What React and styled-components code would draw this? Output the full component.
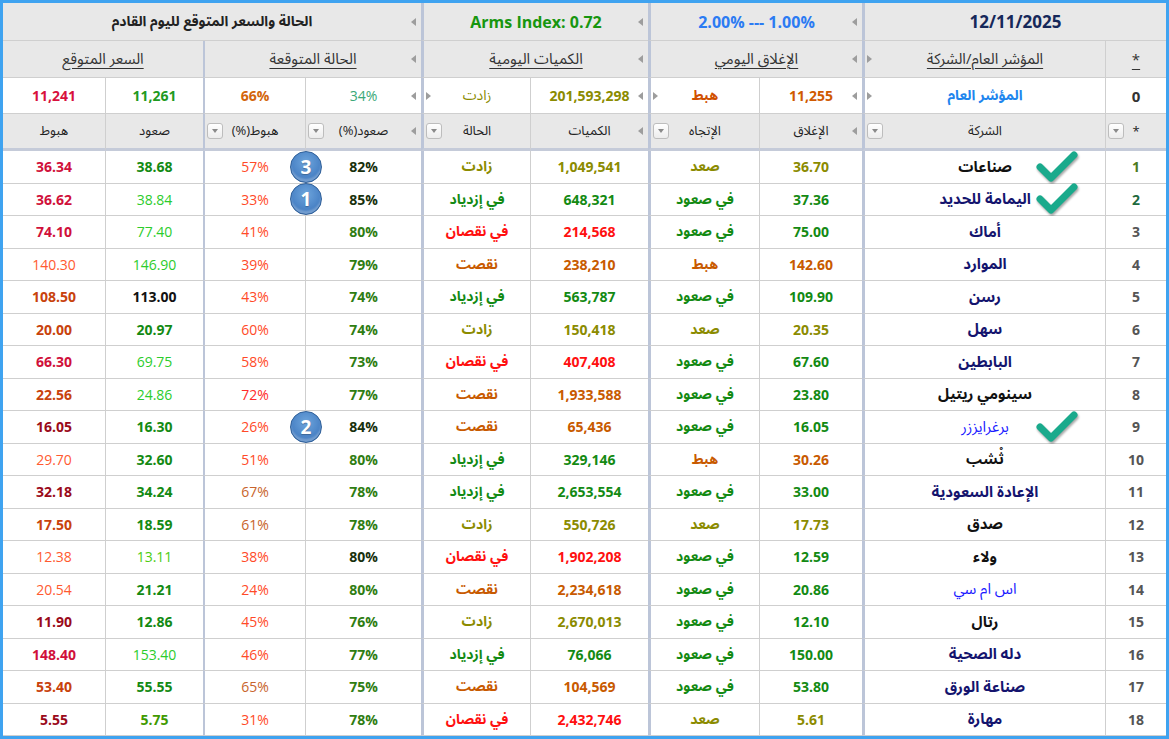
import React from "react";
import styled, { createGlobalStyle } from "styled-components";

const GlobalStyle = createGlobalStyle`
  html, body {
    margin: 0;
    padding: 0;
    background: #fff;
  }
  body {
    font-family: "Open Sans", "Noto Sans Arabic", "DejaVu Sans", sans-serif;
  }
`;

const SEP = {
  0: "none",
  1: "1px solid #cfcfcf",
  2: "2px solid #bcc5d8",
  3: "3px solid #bcc5d8",
};

// right to left: *, company, close, direction, volume, status, up%, down%, up price, down price
const COL_SEP = [1, 3, 1, 3, 1, 3, 1, 2, 1, 0];

const C = {
  olive: "#8b8b00",
  green: "#138a13",
  orange: "#c85a00",
  red: "#ff1010",
  navy: "#14146e",
  blue: "#1a1aff",
  black: "#111",
};

const Frame = styled.div`
  width: 1169px;
  height: 739px;
  box-sizing: border-box;
  border: 3px solid #3fa3f0;
  background: #fff;
  overflow: hidden;
`;

const Grid = styled.div`
  display: grid;
  direction: rtl;
  grid-template-columns: 61px 243px 103px 111px 118px 109px 116px 102px 98px 102px;
  grid-template-rows: 38px 37px 36px 37px repeat(18, 32.5px);
`;

const Cell = styled.div`
  position: relative;
  direction: ltr;
  box-sizing: border-box;
  display: flex;
  align-items: center;
  justify-content: center;
  grid-column: span ${(p) => p.$span || 1};
  border-bottom: ${(p) => p.$bottom || "1px solid #cfcfcf"};
  border-left: ${(p) => SEP[p.$sep]};
  background: ${(p) => (p.$head ? "#e8e8e8" : "#fff")};
  color: ${(p) => p.$color || "#222"};
  font-size: ${(p) => p.$size || 14}px;
  font-weight: ${(p) => (p.$bold ? 700 : 400)};
  white-space: nowrap;
`;

const ColHead = styled(Cell).attrs({ $head: true, $size: 13, $bottom: "3px solid #c5cbd9" })``;

// the grid is right-to-left, so "(%)" sits on the left of the word
const Pct = styled.span`
  display: inline-flex;
  align-items: baseline;
  direction: ltr;
`;

const GroupTitle = styled.span`
  font-size: 15px;
  color: #333;
  text-decoration: underline;
  text-underline-offset: 4px;
`;

const Grip = styled.span`
  position: absolute;
  top: 50%;
  margin-top: -4px;
  width: 0;
  height: 0;
  border-top: 4px solid transparent;
  border-bottom: 4px solid transparent;
  ${(p) =>
    p.$to === "left"
      ? "right: 5px; border-right: 5px solid #9d9d9d;"
      : "left: 2px; border-left: 5px solid #9d9d9d;"}
`;

const Drop = styled.span`
  position: absolute;
  left: 2px;
  top: 50%;
  margin-top: -8px;
  width: 16px;
  height: 16px;
  box-sizing: border-box;
  border: 1px solid #bdbdbd;
  border-radius: 3px;
  background: linear-gradient(#ffffff, #ececec);

  &::after {
    content: "";
    position: absolute;
    left: 4px;
    top: 5px;
    border-left: 3px solid transparent;
    border-right: 3px solid transparent;
    border-top: 4px solid #8a8a8a;
  }
`;

const Badge = styled.span`
  position: absolute;
  z-index: 3;
  left: -16px;
  top: 50%;
  margin-top: -16px;
  width: 32px;
  height: 32px;
  box-sizing: border-box;
  border-radius: 50%;
  border: 1.5px solid #2f5f98;
  background: radial-gradient(circle at 50% 35%, #6ea5dc 0%, #4a83c6 60%, #3b70b0 100%);
  box-shadow: inset 0 -3px 2px rgba(255, 255, 255, 0.25);
  color: #fff;
  font-size: 19px;
  font-weight: 700;
  display: flex;
  align-items: center;
  justify-content: center;
  text-shadow: 0 1px 1px rgba(0, 0, 0, 0.25);
`;

const Check = styled.svg`
  position: absolute;
  right: 26px;
  top: 50%;
  margin-top: -17px;
  width: 44px;
  height: 33px;
  filter: drop-shadow(1px 2px 1px rgba(0, 0, 0, 0.35));
`;

const CheckMark = () => (
  <Check viewBox="0 0 44 33">
    <path
      d="M5 17 L16 28 L39 5"
      fill="none"
      stroke="#1aaa8c"
      strokeWidth="7"
      strokeLinecap="round"
      strokeLinejoin="round"
    />
  </Check>
);

const DIR_COLOR = { "صعد": C.olive, "في صعود": C.green, "هبط": C.orange };
const STATUS_COLOR = {
  "زادت": C.olive,
  "في إزدياد": C.green,
  "في نقصان": C.red,
  "نقصت": C.orange,
};

const UP_PRICE = {
  b: { color: C.green, bold: true },
  l: { color: "#2ccc2c", bold: false },
  y: { color: "#4ccc10", bold: false },
  k: { color: C.black, bold: true },
  o: { color: "#3f9a00", bold: true },
};

const DOWN_PRICE = {
  c: { color: "#d0103a", bold: true },
  r: { color: "#c8420c", bold: true },
  d: { color: "#9a0a1a", bold: true },
  l: { color: "#ff5a30", bold: false },
};

const DOWN_PCT = { a: "#ff4a28", b: "#ff2a2a", c: "#c8642c" };

const rows = [
  ["صناعات", "k", "36.70", "صعد", "1,049,541", "زادت", 82, 57, "a", "38.68", "b", "36.34", "c", 3, true],
  ["اليمامة للحديد", "n", "37.36", "في صعود", "648,321", "في إزدياد", 85, 33, "a", "38.84", "l", "36.62", "c", 1, true],
  ["أماك", "n", "75.00", "في صعود", "214,568", "في نقصان", 80, 41, "a", "77.40", "l", "74.10", "c"],
  ["الموارد", "n", "142.60", "هبط", "238,210", "نقصت", 79, 39, "a", "146.90", "l", "140.30", "l"],
  ["رسن", "n", "109.90", "في صعود", "563,787", "في إزدياد", 74, 43, "a", "113.00", "k", "108.50", "r"],
  ["سهل", "n", "20.35", "صعد", "150,418", "زادت", 74, 60, "a", "20.97", "b", "20.00", "r"],
  ["البابطين", "n", "67.60", "في صعود", "407,408", "في نقصان", 73, 58, "a", "69.75", "l", "66.30", "c"],
  ["سينومي ريتيل", "k", "23.80", "في صعود", "1,933,588", "نقصت", 77, 72, "b", "24.86", "l", "22.56", "r"],
  ["برغرايززر", "u", "16.05", "في صعود", "65,436", "نقصت", 84, 26, "a", "16.30", "b", "16.05", "d", 2, true],
  ["ثْشب", "k", "30.26", "هبط", "329,146", "في إزدياد", 80, 51, "a", "32.60", "b", "29.70", "l"],
  ["الإعادة السعودية", "n", "33.00", "في صعود", "2,653,554", "في إزدياد", 78, 67, "c", "34.24", "b", "32.18", "d"],
  ["صدق", "k", "17.73", "صعد", "550,726", "زادت", 78, 61, "c", "18.59", "b", "17.50", "r"],
  ["ولاء", "k", "12.59", "في صعود", "1,902,208", "في نقصان", 80, 38, "a", "13.11", "y", "12.38", "l"],
  ["اس ام سي", "u", "20.86", "في صعود", "2,234,618", "نقصت", 80, 24, "a", "21.21", "b", "20.54", "l"],
  ["رتال", "k", "12.10", "في صعود", "2,670,013", "زادت", 76, 45, "a", "12.86", "b", "11.90", "d"],
  ["دله الصحية", "n", "150.00", "في صعود", "76,066", "في إزدياد", 77, 46, "a", "153.40", "l", "148.40", "c"],
  ["صناعة الورق", "n", "53.80", "في صعود", "104,569", "نقصت", 75, 65, "c", "55.55", "b", "53.40", "r"],
  ["مهارة", "n", "5.61", "صعد", "2,432,746", "في نقصان", 78, 31, "a", "5.75", "o", "5.55", "d"],
];

const NAME_STYLE = {
  k: { color: C.black, bold: true },
  n: { color: C.navy, bold: true },
  u: { color: C.blue, bold: false },
};

const DARK_UP = [1, 2, 9, 13];
const IDX_COLOR = { 1: "#4e7a1e", 2: "#1e6a3e" };

const DataRow = ({ n, r }) => {
  const [name, nameKind, close, dir, vol, status, up, down, downKind, upP, upKind, downP, downPKind, badge, check] = r;
  const ns = NAME_STYLE[nameKind];
  const us = UP_PRICE[upKind];
  const ds = DOWN_PRICE[downPKind];
  return (
    <>
      <Cell $sep={COL_SEP[0]} $bold $color={IDX_COLOR[n] || "#555"}>{n}</Cell>
      <Cell $sep={COL_SEP[1]} $bold={ns.bold} $color={ns.color} $size={15}>
        {name}
        {check && <CheckMark />}
      </Cell>
      <Cell $sep={COL_SEP[2]} $bold $color={DIR_COLOR[dir]}>{close}</Cell>
      <Cell $sep={COL_SEP[3]} $bold $color={DIR_COLOR[dir]}>{dir}</Cell>
      <Cell $sep={COL_SEP[4]} $bold $color={STATUS_COLOR[status]}>{vol}</Cell>
      <Cell $sep={COL_SEP[5]} $bold $color={STATUS_COLOR[status]}>{status}</Cell>
      <Cell $sep={COL_SEP[6]} $bold $color={DARK_UP.includes(n) ? "#18300c" : "#2f7d12"}>
        {up}%
        {badge && <Badge>{badge}</Badge>}
      </Cell>
      <Cell $sep={COL_SEP[7]} $color={DOWN_PCT[downKind]}>{down}%</Cell>
      <Cell $sep={COL_SEP[8]} $bold={us.bold} $color={us.color}>{upP}</Cell>
      <Cell $sep={COL_SEP[9]} $bold={ds.bold} $color={ds.color}>{downP}</Cell>
    </>
  );
};

export default function App() {
  return (
    <Frame>
      <GlobalStyle />
      <Grid>
        {/* top header */}
        <Cell $head $span={2} $sep={3} $size={17} $bold $color="#16285a">12/11/2025</Cell>
        <Cell $head $span={2} $sep={3} $size={16} $bold $color="#2b7bf3">
          2.00% --- 1.00%
          <Grip $to="left" />
        </Cell>
        <Cell $head $span={2} $sep={3} $size={16} $bold $color="#17960f">
          Arms Index: 0.72
          <Grip $to="left" />
        </Cell>
        <Cell $head $span={4} $sep={0} $size={14} $bold $color="#222">
          الحالة والسعر المتوقع لليوم القادم
          <Grip $to="left" />
        </Cell>

        {/* group titles */}
        <Cell $head $sep={1}><GroupTitle>*</GroupTitle></Cell>
        <Cell $head $sep={3}>
          <GroupTitle>المؤشر العام/الشركة</GroupTitle>
          <Grip $to="right" />
        </Cell>
        <Cell $head $span={2} $sep={3}>
          <GroupTitle>الإغلاق اليومي</GroupTitle>
          <Grip $to="left" />
        </Cell>
        <Cell $head $span={2} $sep={3}>
          <GroupTitle>الكميات اليومية</GroupTitle>
          <Grip $to="left" />
        </Cell>
        <Cell $head $span={2} $sep={2}>
          <GroupTitle>الحالة المتوقعة</GroupTitle>
          <Grip $to="left" />
        </Cell>
        <Cell $head $span={2} $sep={0}>
          <GroupTitle>السعر المتوقع</GroupTitle>
        </Cell>

        {/* market summary */}
        <Cell $sep={1} $bold $size={15} $color="#333">0</Cell>
        <Cell $sep={3} $bold $color="#2085ee">
          المؤشر العام
          <Grip $to="right" />
        </Cell>
        <Cell $sep={1} $bold $color="#d05a00">
          11,255
          <Grip $to="left" />
        </Cell>
        <Cell $sep={3} $bold $color="#d05000">
          هبط
          <Grip $to="right" />
        </Cell>
        <Cell $sep={1} $bold $color={C.olive}>
          201,593,298
          <Grip $to="left" />
        </Cell>
        <Cell $sep={3} $color={C.olive}>
          زادت
          <Grip $to="right" />
        </Cell>
        <Cell $sep={1} $color="#3aa878">
          34%
          <Grip $to="left" />
        </Cell>
        <Cell $sep={2} $bold $color="#d3650b">66%</Cell>
        <Cell $sep={1} $bold $color="#1f9a1f">11,261</Cell>
        <Cell $sep={0} $bold $color="#d8103c">11,241</Cell>

        {/* column headers */}
        <ColHead $sep={1}>
          *
          <Drop />
        </ColHead>
        <ColHead $sep={3}>
          الشركة
          <Drop />
        </ColHead>
        <ColHead $sep={1}>
          الإغلاق
          <Grip $to="left" />
        </ColHead>
        <ColHead $sep={3}>
          الإتجاه
          <Drop />
        </ColHead>
        <ColHead $sep={1}>
          الكميات
          <Grip $to="left" />
        </ColHead>
        <ColHead $sep={3}>
          الحالة
          <Drop />
        </ColHead>
        <ColHead $sep={1}>
          <Pct><span>(%)</span><span>صعود</span></Pct>
          <Drop />
          <Grip $to="left" />
        </ColHead>
        <ColHead $sep={2}>
          <Pct><span>(%)</span><span>هبوط</span></Pct>
          <Drop />
        </ColHead>
        <ColHead $sep={1}>صعود</ColHead>
        <ColHead $sep={0}>هبوط</ColHead>

        {rows.map((r, i) => (
          <DataRow key={i} n={i + 1} r={r} />
        ))}
      </Grid>
    </Frame>
  );
}
